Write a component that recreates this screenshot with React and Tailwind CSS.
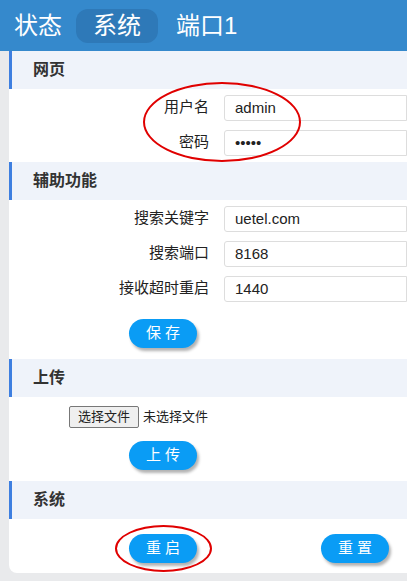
import React from "react";

const font = { fontFamily: '"Liberation Sans", "Noto Sans CJK SC", sans-serif' };

function Header({ title }) {
  return (
    <div className="h-[38px] flex items-center pl-[21px] bg-[#eff3fa] border-l-[3px] border-[#3e7fe0] text-[16px] font-bold text-[#333]">
      {title}
    </div>
  );
}

function Row({ label, value }) {
  return (
    <div className="flex items-center h-[35px]">
      <div className="w-[200px] shrink-0 text-right text-[15px] text-[#222]">{label}</div>
      <input
        readOnly
        value={value}
        type={label === "密码" ? "password" : "text"}
        className="ml-[15px] w-0 flex-1 h-[26px] px-[10px] text-[15px] text-[#222] border border-[#ddd] rounded-l-[3px] outline-none"
      />
    </div>
  );
}

function Btn({ children }) {
  return (
    <div className="w-[68px] h-[29px] rounded-full bg-[#0a9cf5] text-white text-[15px] tracking-[4px] pl-[4px] flex items-center justify-center shadow-[2px_3px_3px_rgba(0,0,0,0.3)]">
      {children}
    </div>
  );
}

export default function App() {
  return (
    <div style={font} className="w-[407px] h-[581px] bg-[#e9eaec] relative overflow-hidden">
      <div className="h-[51px] bg-[#3589cc] flex items-center px-[14px] text-white text-[24px]">
        <span>状态</span>
        <span className="ml-[14px] px-[17px] h-[34px] flex items-center rounded-[12px] bg-[#2e79b8]">系统</span>
        <span className="ml-[18px]">端口1</span>
      </div>
      <div className="ml-[9px] bg-white rounded-bl-[8px] pb-[10px]">
        <Header title="网页" />
        <div className="pt-[1px] pb-[2px]">
          <Row label="用户名" value="admin" />
          <Row label="密码" value="admin" />
        </div>
        <Header title="辅助功能" />
        <div className="pt-[1px]">
          <Row label="搜索关键字" value="uetel.com" />
          <Row label="搜索端口" value="8168" />
          <Row label="接收超时重启" value="1440" />
        </div>
        <div className="pl-[120px] pt-[13px] pb-[11px]">
          <Btn>保存</Btn>
        </div>
        <Header title="上传" />
        <div className="pl-[60px] pt-[9px] flex items-center text-[13px] text-[#222]">
          <span className="border border-[#777] bg-[#efefef] rounded-[2px] px-[8px] h-[22px] flex items-center">选择文件</span>
          <span className="ml-[4px]">未选择文件</span>
        </div>
        <div className="pl-[120px] pt-[13px] pb-[11px]">
          <Btn>上传</Btn>
        </div>
        <Header title="系统" />
        <div className="flex pl-[120px] pt-[15px] gap-[124px]">
          <Btn>重启</Btn>
          <Btn>重置</Btn>
        </div>
      </div>
      <div className="absolute left-[143px] top-[82px] w-[158px] h-[80px] rounded-[50%] border-2 border-[#e00000]" />
      <div className="absolute left-[115px] top-[525px] w-[97px] h-[47px] rounded-[50%] border-2 border-[#e00000]" />
    </div>
  );
}
